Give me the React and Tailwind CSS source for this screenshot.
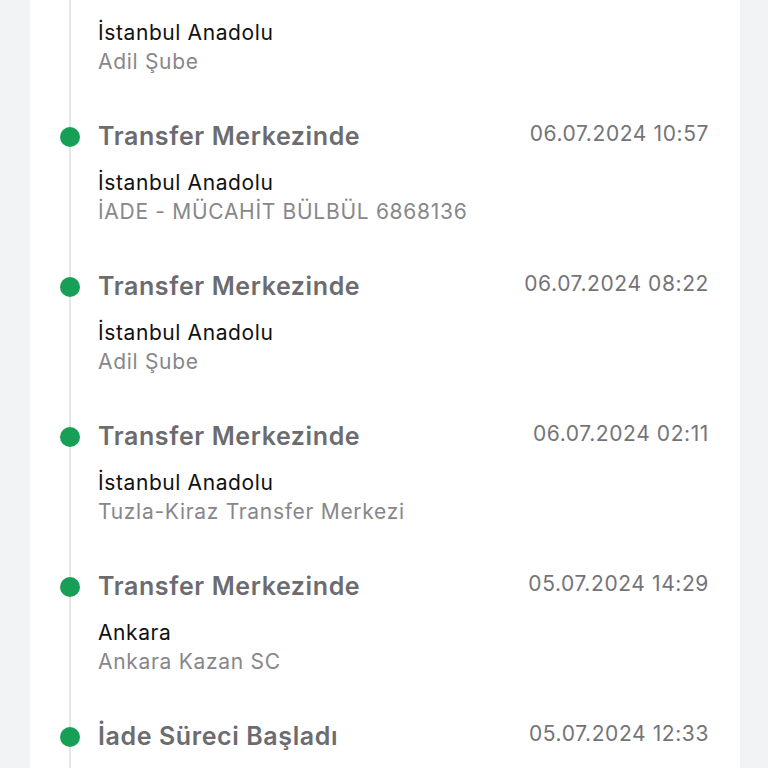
const events = [
  { title: "Transfer Merkezinde", date: "06.07.2024 12:40", place: "İstanbul Anadolu", detail: "Adil Şube" },
  { title: "Transfer Merkezinde", date: "06.07.2024 10:57", place: "İstanbul Anadolu", detail: "İADE - MÜCAHİT BÜLBÜL 6868136" },
  { title: "Transfer Merkezinde", date: "06.07.2024 08:22", place: "İstanbul Anadolu", detail: "Adil Şube" },
  { title: "Transfer Merkezinde", date: "06.07.2024 02:11", place: "İstanbul Anadolu", detail: "Tuzla-Kiraz Transfer Merkezi" },
  { title: "Transfer Merkezinde", date: "05.07.2024 14:29", place: "Ankara", detail: "Ankara Kazan SC" },
  { title: "İade Süreci Başladı", date: "05.07.2024 12:33", place: "Ankara", detail: "Ankara Kazan SC" },
];

function TimelineItem({ item }) {
  return (
    <div className="flex h-[150px]">
      <div className="-ml-[11px] mt-[5px] h-[20px] w-[20px] shrink-0 rounded-full bg-[#189f57]" />
      <div className="ml-[18px] flex-1">
        <div className="flex h-[30px] items-center justify-between">
          <span className="text-[25px] font-semibold tracking-[0.6px] text-[#6c6c70]">{item.title}</span>
          <span className="-mt-[6px] text-[21px] tracking-[0.6px] text-[#747478]">{item.date}</span>
        </div>
        <div className="mt-[17px] text-[21px] leading-[28px] tracking-[0.6px] text-[#111111]">{item.place}</div>
        <div className="mt-[1px] text-[21px] leading-[28px] tracking-[0.7px] text-[#87878b]">{item.detail}</div>
      </div>
    </div>
  );
}

export default function App() {
  return (
    <div className="flex h-[768px] overflow-hidden bg-[#f2f3f5] font-['Inter',sans-serif]">
      <div className="ml-[30px] mr-[28px] flex-1 bg-white pr-[31px]">
        <div className="-mt-[28px] ml-[39px] border-l-2 border-[#e6e6e8]">
          {events.map((item, i) => (
            <TimelineItem key={i} item={item} />
          ))}
        </div>
      </div>
    </div>
  );
}
